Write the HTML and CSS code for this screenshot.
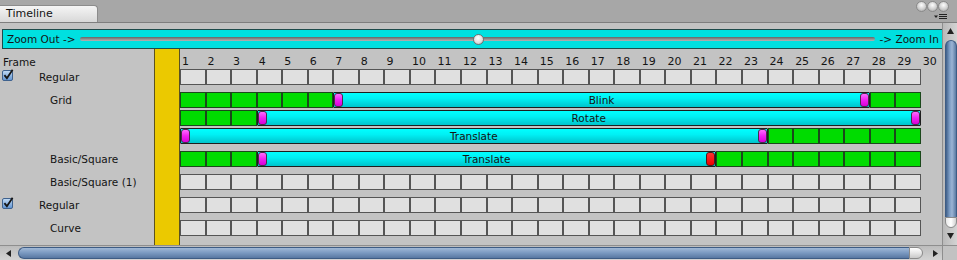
FILE: index.html
```html
<!DOCTYPE html>
<html lang="en">
<head>
    <meta charset="UTF-8">
    <title>Timeline</title>
    <link rel="stylesheet" href="styles.css">
</head>
<body>
    <div class="window">
        <div class="titlebar">
            <div class="tab">Timeline</div>
            <div class="titlebar-right">
                <div class="win-buttons">
                    <span class="dot"></span><span class="dot"></span><span class="dot"></span>
                </div>
                <svg class="menu-icon" width="14" height="6" viewBox="0 0 14 6">
                    <path d="M0 1.5 L4 1.5 L2 4 Z" fill="#222"/>
                    <rect x="5" y="0" width="8" height="1" fill="#222"/>
                    <rect x="5" y="2" width="8" height="1" fill="#222"/>
                    <rect x="5" y="4" width="8" height="1" fill="#222"/>
                </svg>
            </div>
        </div>

        <div class="middle">
            <div class="main">
                <div class="zoombar">
                    <span class="zoom-label">Zoom Out -&gt;</span>
                    <div class="slider">
                        <div class="groove"></div>
                        <div class="knob"></div>
                    </div>
                    <span class="zoom-label">-&gt; Zoom In</span>
                </div>

                <div class="timeline">
                    <div class="labels" id="labels">
                        <div class="frames-row frame-title">Frame</div>
                    </div>
                    <div class="playhead"></div>
                    <div class="tracks" id="tracks">
                        <div class="frames-row frames" id="frames"></div>
                    </div>
                </div>
            </div>

            <div class="vscroll">
                <svg width="7" height="6" viewBox="0 0 7 6"><path d="M3.5 0 L7 6 L0 6 Z" fill="#222"/></svg>
                <div class="vthumb"></div>
                <div class="vcap"></div>
                <div class="spacer"></div>
                <svg width="7" height="6" viewBox="0 0 7 6"><path d="M0 0 L7 0 L3.5 6 Z" fill="#222"/></svg>
            </div>
        </div>

        <div class="hscroll">
            <svg class="arrow-left" width="5" height="7" viewBox="0 0 5 7"><path d="M0 3.5 L5 0 L5 7 Z" fill="#222"/></svg>
            <div class="hthumb"></div>
            <div class="hcap"></div>
            <svg class="arrow-right" width="5" height="7" viewBox="0 0 5 7"><path d="M0 0 L5 3.5 L0 7 Z" fill="#222"/></svg>
            <div class="corner"></div>
        </div>
    </div>

    <script>
        // linhas do timeline
        const linhas = [
            { label: 'Regular', check: true },
            { label: 'Grid', green: [[1, 6], [28, 29]], bar: [7, 27, 'Blink', 'key'] },
            { label: '', sub: true, green: [[1, 3]], bar: [4, 29, 'Rotate', 'key'] },
            { label: '', sub: true, green: [[24, 29]], bar: [1, 23, 'Translate', 'key'] },
            { label: 'Basic/Square', green: [[1, 3], [22, 29]], bar: [4, 21, 'Translate', 'stop'] },
            { label: 'Basic/Square (1)' },
            { label: 'Regular', check: true },
            { label: 'Curve' }
        ];

        const checkSvg = `<svg class="check" width="12" height="12" viewBox="0 0 12 12">
            <defs><linearGradient id="cb" x1="0" y1="0" x2="0" y2="1">
                <stop offset="0" stop-color="#c4dcf4"/><stop offset="1" stop-color="#5f93d2"/>
            </linearGradient></defs>
            <rect x="0.5" y="1.5" width="10" height="10" rx="1.5" fill="url(#cb)" stroke="#3f628e"/>
            <path d="M2.4 6.2 L4.9 9.2 L10.6 0.8" fill="none" stroke="#161616" stroke-width="1.8"/>
        </svg>`;

        // numeros dos frames
        const frames = document.getElementById('frames');
        for (let i = 1; i <= 30; i++) {
            const s = document.createElement('span');
            s.textContent = i;
            frames.appendChild(s);
        }

        const labels = document.getElementById('labels');
        const tracks = document.getElementById('tracks');

        function isGreen(linha, col) {
            return (linha.green || []).some(r => col >= r[0] && col <= r[1]);
        }

        linhas.forEach(linha => {
            const lab = document.createElement('div');
            lab.className = 'row label' + (linha.sub ? ' sub' : '') + (linha.check ? ' group' : '');
            lab.innerHTML = linha.check ? checkSvg + `<span>${linha.label}</span>` : linha.label;
            labels.appendChild(lab);

            const tr = document.createElement('div');
            tr.className = 'row track' + (linha.sub ? ' sub' : '');
            let col = 1;
            while (col <= 29) {
                if (linha.bar && col === linha.bar[0]) {
                    const [de, ate, texto, fim] = linha.bar;
                    const bar = document.createElement('div');
                    bar.className = 'bar';
                    bar.style.gridColumn = 'span ' + (ate - de + 1);
                    bar.innerHTML = `<span class="key"></span><span class="bar-text">${texto}</span><span class="key ${fim}"></span>`;
                    tr.appendChild(bar);
                    col = ate + 1;
                    continue;
                }
                const c = document.createElement('div');
                c.className = 'cell' + (isGreen(linha, col) ? ' on' : '');
                tr.appendChild(c);
                col++;
            }
            tracks.appendChild(tr);
        });
    </script>
</body>
</html>
```

FILE: styles.css
```css
* {
    box-sizing: border-box;
}

body {
    margin: 0;
    font-family: "DejaVu Sans", sans-serif;
    font-size: 10.5px;
    color: #141414;
    background: #c3c3c3;
}

.window {
    width: 957px;
    height: 260px;
    display: flex;
    flex-direction: column;
    overflow: hidden;
}

/* barra de cima */
.titlebar {
    height: 23px;
    flex-shrink: 0;
    display: flex;
    background: #a7a7a7;
    border-bottom: 1px solid #7e7e7e;
}

.tab {
    align-self: flex-end;
    width: 98px;
    height: 17px;
    padding-left: 6px;
    line-height: 16px;
    font-size: 11px;
    border: 1px solid #8c8c8c;
    border-bottom: 0;
    border-left: 0;
    border-radius: 0 4px 0 0;
    background: linear-gradient(#f5f5f5, #d8d8d8);
}

.titlebar-right {
    margin-left: auto;
    padding: 1px 8px 0 0;
    display: flex;
    flex-direction: column;
    align-items: flex-end;
}

.win-buttons {
    display: flex;
}

.dot {
    width: 11px;
    height: 11px;
    border-radius: 50%;
    border: 1px solid #8a8a8a;
    background: radial-gradient(circle at 50% 35%, #fdfdfd, #cfcfcf 55%, #9c9c9c);
}

.menu-icon {
    margin-top: 2px;
    margin-right: 1px;
}

.middle {
    flex: 1;
    display: flex;
    min-height: 0;
}

.main {
    width: 942px;
    overflow: hidden;
    padding-top: 6px;
    display: flex;
    flex-direction: column;
}

/* zoom */
.zoombar {
    flex-shrink: 0;
    width: 960px;
    height: 20px;
    margin-left: 2px;
    padding-left: 4px;
    display: flex;
    align-items: center;
    background: #00e0e0;
    border: 1px solid #1e4b4b;
}

.zoom-label {
    white-space: nowrap;
    line-height: 16px;
}

.slider {
    position: relative;
    width: 795px;
    height: 11px;
    margin: 0 5px 0 4px;
    display: flex;
    align-items: center;
}

.groove {
    width: 100%;
    height: 4px;
    border-radius: 2px;
    background: linear-gradient(#666, #8d8d8d 50%, #b4b4b4);
}

.knob {
    position: absolute;
    left: 50%;
    top: 0;
    width: 11px;
    height: 11px;
    margin-left: -4px;
    border-radius: 50%;
    border: 1px solid #6f6f6f;
    background: radial-gradient(circle at 45% 35%, #fff, #dcdcdc 60%, #a0a0a0);
}

/* timeline */
.timeline {
    flex: 1;
    display: flex;
    min-height: 0;
}

.labels {
    width: 154px;
    flex-shrink: 0;
}

.playhead {
    width: 26px;
    flex-shrink: 0;
    background: #ebc900;
    border-left: 1px solid #5c5220;
    border-right: 1px solid #5c5220;
}

.tracks {
    flex: 1;
}

.frames-row {
    height: 20px;
    padding-top: 6px;
    line-height: 14px;
}

.frame-title {
    padding-left: 3px;
}

.frames {
    display: grid;
    grid-template-columns: repeat(30, 25.55px);
    font-size: 11px;
}

.frames span {
    padding-left: 2px;
}

.row {
    height: 16px;
    margin-top: 7px;
    line-height: 16px;
}

.frames-row + .row {
    margin-top: 0;
}

.row.sub {
    margin-top: 2px;
}

.label {
    padding-left: 50px;
    white-space: nowrap;
}

.label.group {
    padding-left: 2px;
    display: flex;
}

.check {
    margin-right: 25px;
    flex-shrink: 0;
}

.track {
    display: grid;
    grid-template-columns: repeat(29, 25.55px);
}

.cell {
    border: 1px solid #555;
    background: #e0e0e0;
}

.cell.on {
    background: #00dc00;
    border-color: #1b481b;
}

.bar {
    display: flex;
    border: 1px solid #1e1e1e;
    border-radius: 1px;
    background: linear-gradient(#00ffff, #00f0f4 40%, #00c4cc);
}

.key {
    width: 9px;
    flex-shrink: 0;
    border: 1px solid #4a2a4a;
    border-radius: 3px;
    background: linear-gradient(#ff6cff, #f020f0 50%, #d800d8);
}

.key.stop {
    background: linear-gradient(#ff3030, #ee0000);
    border-color: #4a1a1a;
}

.bar-text {
    flex: 1;
    text-align: center;
    line-height: 14px;
}

/* scroll vertical */
.vscroll {
    width: 15px;
    flex-shrink: 0;
    display: flex;
    flex-direction: column;
    align-items: center;
    padding: 5px 0 6px 1px;
    border-left: 1px solid #8e8e8e;
    background: linear-gradient(to right, #b9b9b9, #d3d3d3);
}

.vthumb {
    width: 12px;
    height: 177px;
    margin-top: 6px;
    border-radius: 6px 6px 0 0;
    border: 1px solid #3e5c84;
    border-bottom: 0;
    background: linear-gradient(to right, #3f5f89, #7b9bc3 35%, #9bb4d4 60%, #5a7aa3);
}

.vcap {
    width: 12px;
    height: 11px;
    border-radius: 0 0 6px 6px;
    border: 1px solid #8a8a8a;
    background: linear-gradient(to right, #e8e8e8, #fff 50%, #d0d0d0);
}

.spacer {
    flex: 1;
}

/* scroll horizontal */
.hscroll {
    height: 15px;
    flex-shrink: 0;
    display: flex;
    align-items: center;
    border-top: 1px solid #8e8e8e;
    background: linear-gradient(#bcbcbc, #d3d3d3);
}

.arrow-left {
    margin-left: 6px;
}

.hthumb {
    width: 891px;
    height: 12px;
    margin-left: 7px;
    border-radius: 6px 0 0 6px;
    border: 1px solid #3e5c84;
    border-right: 0;
    background: linear-gradient(#a0b8d6, #7d9cc3 45%, #5878a2);
}

.hcap {
    width: 14px;
    height: 12px;
    border-radius: 0 6px 6px 0;
    border: 1px solid #8a8a8a;
    background: linear-gradient(#fff, #e6e6e6 50%, #c8c8c8);
}

.arrow-right {
    margin-left: 10px;
}

.corner {
    margin-left: auto;
    width: 15px;
    height: 100%;
    border-left: 1px solid #8e8e8e;
    background: #c2c2c2;
}
```
